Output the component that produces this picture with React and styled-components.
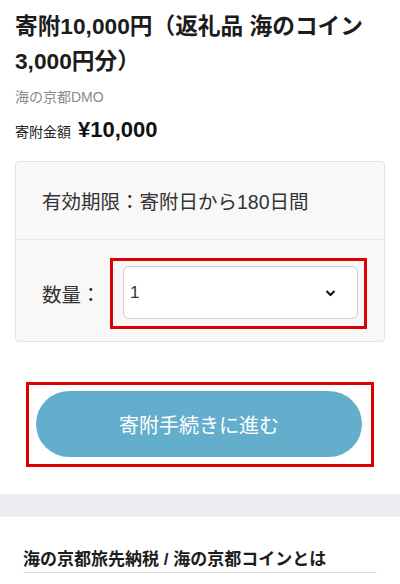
import React, { useState } from "react";
import styled, { createGlobalStyle } from "styled-components";

const GlobalStyle = createGlobalStyle`
  body {
    margin: 0;
    background: #fff;
    font-family: "Liberation Sans", "Noto Sans CJK JP", sans-serif;
    color: #222;
  }
`;

const Page = styled.div`
  width: 400px;
`;

const Section = styled.div`
  padding: 9px 15px 0;
`;

const Title = styled.h1`
  margin: 0;
  font-size: 22.7px;
  line-height: 35px;
  font-weight: 700;
  color: #1c1c1c;
`;

const Shop = styled.div`
  margin-top: 9px;
  font-size: 14px;
  line-height: 18px;
  color: #8a8a8a;
`;

const AmountRow = styled.div`
  display: flex;
  align-items: baseline;
  gap: 7px;
  margin-top: 11px;
`;

const AmountLabel = styled.span`
  font-size: 14px;
  color: #222;
`;

const AmountValue = styled.span`
  font-size: 22px;
  font-weight: 700;
  color: #111;
`;

const Card = styled.div`
  margin-top: 18px;
  border: 1px solid #e3e3e3;
  border-radius: 4px;
  background: #f8f8f8;
`;

const CardRow = styled.div`
  box-sizing: border-box;
  display: flex;
  align-items: center;
  padding: ${(props) => props.pad || "0 26px"};
  min-height: ${(props) => props.h || 0}px;
  font-size: 19.5px;
  color: #333;
  & + & {
    border-top: 1px solid #e6e6e6;
  }
`;

const Label = styled.span`
  width: 68px;
  flex-shrink: 0;
`;

const Highlight = styled.div`
  border: 3px solid #dd0000;
  padding: ${(props) => props.pad};
  background: ${(props) => props.bg || "transparent"};
`;

const SelectBox = styled.div`
  position: relative;
  width: 235px;
`;

const Select = styled.select`
  display: block;
  width: 100%;
  height: 53px;
  box-sizing: border-box;
  appearance: none;
  border: 1px solid #cfcfcf;
  border-radius: 6px;
  background: #fff;
  padding: 0 6px;
  font-family: "Liberation Sans", sans-serif;
  font-size: 17px;
  color: #333;
`;

const Chevron = styled.svg`
  position: absolute;
  right: 22px;
  top: 50%;
  transform: translateY(-50%);
  pointer-events: none;
`;

const ButtonArea = styled.div`
  display: flex;
  justify-content: center;
  margin-top: 40px;
`;

const Button = styled.button`
  display: block;
  width: 326px;
  height: 66px;
  border: none;
  border-radius: 33px;
  background: #63aecd;
  color: #fff;
  font-family: "Liberation Sans", "Noto Sans CJK JP", sans-serif;
  font-size: 20px;
  cursor: pointer;
`;

const Band = styled.div`
  margin-top: 27px;
  height: 23px;
  background: #ececf0;
`;

const Info = styled.div`
  padding: 32px 23px 0;
`;

const InfoTitle = styled.h2`
  margin: 0;
  padding-bottom: 1px;
  border-bottom: 1px solid #dcdcdc;
  font-size: 17px;
  line-height: 22px;
  font-weight: 700;
  color: #1c1c1c;
`;

export default function App() {
  const [qty, setQty] = useState("1");

  return (
    <Page>
      <GlobalStyle />
      <Section>
        <Title>寄附10,000円（返礼品 海のコイン3,000円分）</Title>
        <Shop>海の京都DMO</Shop>
        <AmountRow>
          <AmountLabel>寄附金額</AmountLabel>
          <AmountValue>¥10,000</AmountValue>
        </AmountRow>
        <Card>
          <CardRow h={77}>有効期限：寄附日から180日間</CardRow>
          <CardRow pad="18px 17px 12px 26px">
            <Label>数量：</Label>
            <Highlight pad="5px 6px 7px 10px">
              <SelectBox>
                <Select value={qty} onChange={(e) => setQty(e.target.value)}>
                  {[1, 2, 3, 4, 5].map((n) => (
                    <option key={n} value={n}>
                      {n}
                    </option>
                  ))}
                </Select>
                <Chevron width="11" height="7" viewBox="0 0 11 7">
                  <path d="M1.5 1.5l4 4 4-4" fill="none" stroke="#111" strokeWidth="2" />
                </Chevron>
              </SelectBox>
            </Highlight>
          </CardRow>
        </Card>
        <ButtonArea>
          <Highlight pad="6px 9px 7px 7px" bg="#fff">
            <Button>寄附手続きに進む</Button>
          </Highlight>
        </ButtonArea>
      </Section>
      <Band />
      <Info>
        <InfoTitle>海の京都旅先納税 / 海の京都コインとは</InfoTitle>
      </Info>
    </Page>
  );
}
